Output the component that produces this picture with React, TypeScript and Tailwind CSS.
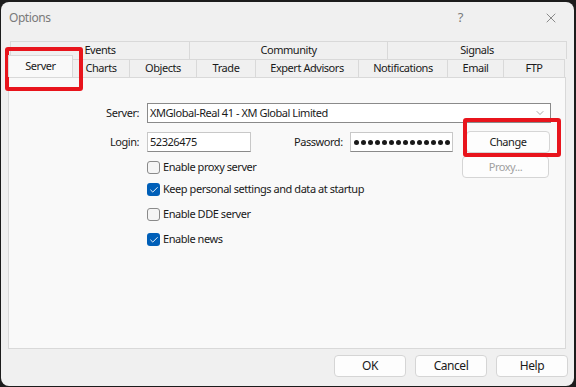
import { Check, ChevronDown, X } from "lucide-react";

const backTabs = [
  { label: "Events", w: "w-[180px]" },
  { label: "Community", w: "w-[198px]" },
  { label: "Signals", w: "w-[179px]" },
];

const frontTabs = [
  { label: "Charts", w: "w-[57px]" },
  { label: "Objects", w: "w-[67px]" },
  { label: "Trade", w: "w-[59px]" },
  { label: "Expert Advisors", w: "w-[103px]" },
  { label: "Notifications", w: "w-[89px]" },
  { label: "Email", w: "w-[56px]" },
  { label: "FTP", w: "w-[61px]" },
];

const dots = Array.from({ length: 14 }, (_, i) => i);

function CheckRow({ label, checked }: { label: string; checked?: boolean }) {
  return (
    <div className="flex h-[13px] items-center gap-[3px]">
      {checked ? (
        <span className="flex h-[13px] w-[13px] items-center justify-center rounded-[3px] bg-[#005fb8]">
          <Check size={10} strokeWidth={2.2} className="text-white" />
        </span>
      ) : (
        <span className="h-[13px] w-[13px] rounded-[3px] border border-[#8a8a8a] bg-[#f5f5f5]" />
      )}
      <span className="text-[#1a1a1a]">{label}</span>
    </div>
  );
}

function Button({ label, w, disabled }: { label: string; w: string; disabled?: boolean }) {
  return (
    <div
      className={`flex h-[22px] ${w} items-center justify-center rounded-[4px] border border-[#d5d5d5] bg-[#fdfdfd] ${
        disabled ? "text-[#a0a0a0]" : "text-[#1a1a1a]"
      }`}
    >
      {label}
    </div>
  );
}

export default function App() {
  return (
    <div className="h-[387px] w-[576px] overflow-hidden bg-[#1c1c1c] pl-[1px] pt-[2px] font-['Noto_Sans',sans-serif] text-[11px] tracking-[-0.45px]">
      <div className="relative flex h-[384px] w-[573px] flex-col rounded-[8px] bg-[#f0f0f0]">
        {/* title bar */}
        <div className="flex h-[31px] items-center pl-[8px] pr-[15px] text-[12px] text-[#7a7a7a]">
          <span>Options</span>
          <span className="ml-auto mr-[80px] text-[13px] text-[#7a7a7a]">?</span>
          <X size={16} strokeWidth={1} className="text-[#555]" />
        </div>

        {/* tabs */}
        <div className="mt-[8px] ml-[7px] flex flex-col">
          <div className="flex h-[18px] pl-[2px]">
            {backTabs.map((t) => (
              <div
                key={t.label}
                className={`flex ${t.w} items-center justify-center border-t border-r border-[#d9d9d9] bg-[#f0f0f0] text-[#1a1a1a] first:border-l`}
              >
                {t.label}
              </div>
            ))}
          </div>
          <div className="relative flex h-[18px]">
            <div className="relative z-10 -mt-[4px] flex h-[22px] w-[65px] items-center justify-center border-x border-t border-[#d9d9d9] bg-[#f9f9f9] pb-[1px] text-[#1a1a1a]">
              Server
            </div>
            {frontTabs.map((t) => (
              <div
                key={t.label}
                className={`flex ${t.w} items-center justify-center border-t border-r border-[#d9d9d9] bg-[#f0f0f0] text-[#1a1a1a]`}
              >
                {t.label}
              </div>
            ))}
          </div>
        </div>

        {/* panel */}
        <div className="ml-[7px] h-[272px] w-[558px] border border-[#d9d9d9] bg-[#f9f9f9] pt-[25px] text-[#1a1a1a]">
          <div className="flex h-[20px] items-center">
            <span className="w-[131px] pr-[1px] text-right">Server:</span>
            <div className="ml-[7px] flex h-[20px] w-[404px] items-center border border-[#8a8a8a] bg-white pl-[2px] pr-[4px]">
              <span>XMGlobal-Real 41 - XM Global Limited</span>
              <ChevronDown size={12} strokeWidth={1} className="ml-auto text-[#555]" />
            </div>
          </div>

          <div className="mt-[8px] flex h-[22px] items-center">
            <span className="w-[131px] pr-[1px] text-right">Login:</span>
            <div className="ml-[7px] flex h-[20px] w-[104px] items-center border border-[#c8c8c8] border-b-[#8a8a8a] bg-white pl-[2px]">
              52326475
            </div>
            <span className="ml-[43px] w-[56px]">Password:</span>
            <div className="flex h-[20px] w-[103px] items-center gap-[2px] border border-[#c8c8c8] border-b-[#8a8a8a] bg-white pl-[3px]">
              {dots.map((d) => (
                <span key={d} className="h-[5px] w-[5px] rounded-full bg-[#1a1a1a]" />
              ))}
            </div>
            <div className="ml-[13px]">
              <Button label="Change" w="w-[84px]" />
            </div>
          </div>

          <div className="mt-[4px] flex h-[20px] items-center">
            <div className="ml-[138px]">
              <CheckRow label="Enable proxy server" />
            </div>
            <div className="ml-auto mr-[16px]">
              <Button label="Proxy..." w="w-[87px]" disabled />
            </div>
          </div>

          <div className="ml-[138px] mt-[6px] flex flex-col gap-[12px]">
            <CheckRow label="Keep personal settings and data at startup" checked />
            <CheckRow label="Enable DDE server" />
            <CheckRow label="Enable news" checked />
          </div>
        </div>

        {/* bottom buttons */}
        <div className="mt-[6px] flex justify-end gap-[9px] pr-[6px] text-[12px]">
          <Button label="OK" w="w-[72px]" />
          <Button label="Cancel" w="w-[72px]" />
          <Button label="Help" w="w-[72px]" />
        </div>

        {/* annotation boxes */}
        <div className="absolute left-[4px] top-[45px] h-[44px] w-[78px] rounded-[3px] border-[4px] border-[#e8141c]" />
        <div className="absolute left-[462px] top-[116px] h-[39px] w-[98px] rounded-[3px] border-[4px] border-[#e8141c]" />
      </div>
    </div>
  );
}
